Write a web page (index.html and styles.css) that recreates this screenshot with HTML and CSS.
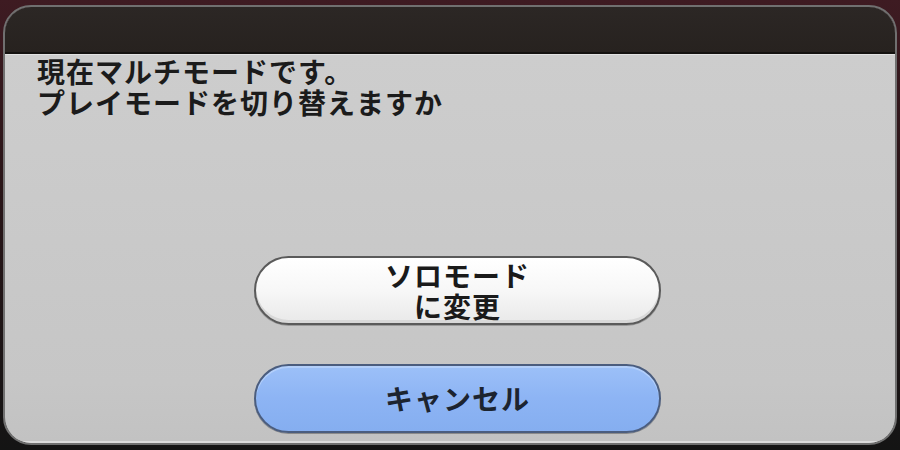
FILE: index.html
```html
<!DOCTYPE html>
<html lang="ja">
<head>
  <meta charset="UTF-8" />
  <title>プレイモード切り替え</title>
  <link rel="stylesheet" href="styles.css">
</head>
<body>
  <div class="dialog">
    <div class="dialog-header"></div>
    <div class="dialog-body">
      <p class="message">現在マルチモードです。<br>プレイモードを切り替えますか</p>
      <div class="actions">
        <button class="btn btn-white">ソロモード<br>に変更</button>
        <button class="btn btn-blue">キャンセル</button>
      </div>
    </div>
  </div>
</body>
</html>
```

FILE: styles.css
```css
* {
  box-sizing: border-box;
}
body {
  margin: 0;
  width: 900px;
  height: 450px;
  overflow: hidden;
  background: linear-gradient(to bottom, #3e1b22 0%, #2a1518 40%, #141414 100%);
  font-family: "Noto Sans CJK JP", "Noto Sans", sans-serif;
  padding: 5px 0 0 3px;
}
.dialog {
  width: 894px;
  height: 440px;
  border: 2px solid #707070;
  border-radius: 28px;
  overflow: hidden;
  display: flex;
  flex-direction: column;
  box-shadow: inset 0 0 0 1px #a0a0a0;
}
.dialog-header {
  height: 47px;
  flex: none;
  background: linear-gradient(to bottom, #2c2725, #27221f);
  border-bottom: 2px solid #141210;
}
.dialog-body {
  flex: 1;
  display: flex;
  flex-direction: column;
  background: linear-gradient(to bottom, #cdcdcd, #c6c6c6 85%, #c2c2c2);
  border-top: 1px solid #e2e2e2;
  border-bottom: 2px solid #dcdcdc;
  padding: 0 0 8px 32px;
}
.message {
  margin: 1px 0 0;
  font-size: 28px;
  line-height: 31px;
  font-weight: bold;
  color: #1b1b1b;
  letter-spacing: 1px;
}
.actions {
  margin-top: auto;
  margin-left: 217px;
  width: 407px;
  display: flex;
  flex-direction: column;
  gap: 39px;
}
.btn {
  height: 69px;
  border-radius: 35px;
  font-family: inherit;
  font-size: 28px;
  line-height: 31px;
  font-weight: bold;
  color: #1a1a1a;
  letter-spacing: 1px;
  padding: 0;
}
.btn-white {
  background: linear-gradient(to bottom, #ffffff, #f7f7f7 50%, #e9e9e9);
  border: 2px solid #5a5a5a;
  box-shadow: inset 0 -3px 0 #d8d8d8, 0 1px 0 #9a9a9a;
}
.btn-blue {
  background: linear-gradient(to bottom, #9cc0f8, #8db4f4 50%, #85aef0);
  border: 2px solid #4b5d7e;
  color: #1c2430;
  box-shadow: inset 0 2px 0 #b3cffa, 0 1px 0 #8a8a8a;
}
```
